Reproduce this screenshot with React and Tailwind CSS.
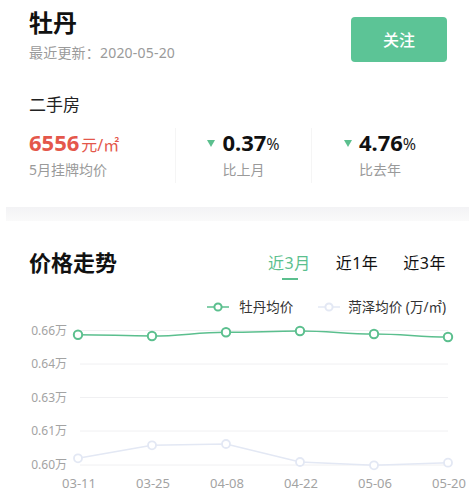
import React from 'react';

const green = '#5bbf8e';
const light = '#e3e8f4';

const xs = [78, 152, 226, 300, 374, 448];
const greenYs = [334.7, 336, 332.3, 331, 334, 337];
const lightYs = [458.3, 445.3, 444, 462, 465.3, 462.7];
const dates = ['03-11', '03-25', '04-08', '04-22', '05-06', '05-20'];
const yTicks = [
  { label: '0.66万', y: 330.5 },
  { label: '0.64万', y: 364 },
  { label: '0.63万', y: 397.5 },
  { label: '0.61万', y: 431 },
  { label: '0.60万', y: 465 },
];

function smoothPath(ys) {
  let d = `M${xs[0]} ${ys[0]}`;
  for (let i = 1; i < xs.length; i++) {
    const cx = (xs[i] - xs[i - 1]) * 0.4;
    d += ` C${xs[i - 1] + cx} ${ys[i - 1]} ${xs[i] - cx} ${ys[i]} ${xs[i]} ${ys[i]}`;
  }
  return d;
}

function linePath(ys) {
  return xs.map((x, i) => `${i ? 'L' : 'M'}${x} ${ys[i]}`).join(' ');
}

function DownArrow() {
  return (
    <svg width="8" height="7" viewBox="0 0 8 7" className="mr-[7px] mt-[3px]">
      <path d="M0 0 H8 L4 7 Z" fill={green} />
    </svg>
  );
}

function Chart() {
  return (
    <svg width="475" height="176" viewBox="0 318 475 176" className="block">
      {yTicks.map(t => (
        <g key={t.label}>
          <line x1="80" x2="448" y1={t.y} y2={t.y} stroke="#f0f0f2" strokeWidth="1" />
          <text x="67" y={t.y + 4} textAnchor="end" fontSize="12" fill="#a3a3a3">
            {t.label}
          </text>
        </g>
      ))}
      <path d={linePath(lightYs)} fill="none" stroke={light} strokeWidth="1.5" />
      <path d={smoothPath(greenYs)} fill="none" stroke={green} strokeWidth="1.5" />
      {xs.map((x, i) => (
        <circle key={'l' + i} cx={x} cy={lightYs[i]} r="4" fill="#fff" stroke={light} strokeWidth="1.8" />
      ))}
      {xs.map((x, i) => (
        <circle key={'g' + i} cx={x} cy={greenYs[i]} r="4.2" fill="#fff" stroke={green} strokeWidth="2" />
      ))}
      {dates.map((d, i) => (
        <text key={d} x={xs[i] + 1} y="488" textAnchor="middle" fontSize="13" fill="#a3a3a3">
          {d}
        </text>
      ))}
    </svg>
  );
}

export default function App() {
  return (
    <div
      className="w-[475px] h-[494px] bg-white overflow-hidden"
      style={{ fontFamily: '"Noto Sans", "Noto Sans CJK SC", sans-serif' }}
    >
      {/* header */}
      <div className="flex justify-between pl-[29px] pr-[28px] pt-[7px]">
        <div>
          <div className="text-[24px] leading-[32px] font-bold text-[#111]">牡丹</div>
          <div className="mt-1 text-[14px] leading-5 text-[#9a9a9a] tracking-[0.2px]">最近更新：2020-05-20</div>
        </div>
        <button className="mt-[10px] w-[96px] h-[45px] rounded-[4px] bg-[#5cc496] text-white text-[16px] font-medium">
          关注
        </button>
      </div>

      {/* second-hand */}
      <div className="pl-[29px] pr-[27px] mt-[30px]">
        <div className="text-[17px] leading-6 text-[#222]">二手房</div>
        <div className="flex mt-[11px]">
          <div className="w-[147px] border-r border-[#f5f5f5]">
            <div className="flex items-baseline h-[28px]">
              <span className="text-[22px] font-bold text-[#e4574b] leading-[28px]">6556</span>
              <span className="text-[16px] text-[#e4574b] ml-[2px]">元/㎡</span>
            </div>
            <div className="mt-1 text-[14px] leading-5 text-[#9a9a9a] pb-[3px]">5月挂牌均价</div>
          </div>
          <div className="w-[136px] border-r border-[#f5f5f5] flex flex-col items-center">
            <div className="flex items-center h-[28px]">
              <DownArrow />
              <span className="text-[22px] font-bold text-[#111] leading-[28px]">0.37</span>
              <span className="text-[16px] text-[#222] mt-[3px]">%</span>
            </div>
            <div className="mt-1 text-[14px] leading-5 text-[#9a9a9a]">比上月</div>
          </div>
          <div className="w-[136px] flex flex-col items-center">
            <div className="flex items-center h-[28px]">
              <DownArrow />
              <span className="text-[22px] font-bold text-[#111] leading-[28px]">4.76</span>
              <span className="text-[16px] text-[#222] mt-[3px]">%</span>
            </div>
            <div className="mt-1 text-[14px] leading-5 text-[#9a9a9a]">比去年</div>
          </div>
        </div>
      </div>

      {/* separator band */}
      <div className="mx-[6px] mt-[24px] h-[14px] bg-gradient-to-b from-[#f3f3f5] to-[#fafafa]" />

      {/* trend */}
      <div className="flex justify-between items-center pl-[29px] pr-[29px] mt-[26px]">
        <div className="text-[22px] leading-[30px] font-bold text-[#111]">价格走势</div>
        <div className="flex gap-[25px] text-[16px] leading-6 mt-[2px] tracking-[0.5px]">
          <div className="relative text-[#5bbf8e]">
            近3月
            <div className="absolute left-[14px] top-[27px] w-[16px] h-[2px] bg-[#5bbf8e]" />
          </div>
          <div className="text-[#111]">近1年</div>
          <div className="text-[#111]">近3年</div>
        </div>
      </div>

      {/* legend */}
      <div className="flex justify-end items-center pr-[29px] mt-[21px] text-[13.5px] leading-[18px] text-[#333]">
        <svg width="22" height="10" viewBox="0 0 22 10" className="mr-[10px]">
          <line x1="0" x2="22" y1="5" y2="5" stroke={green} strokeWidth="1.5" />
          <circle cx="11" cy="5" r="3.6" fill="#fff" stroke={green} strokeWidth="2" />
        </svg>
        <span>牡丹均价</span>
        <svg width="22" height="10" viewBox="0 0 22 10" className="ml-[25px] mr-[8px]">
          <line x1="0" x2="22" y1="5" y2="5" stroke={light} strokeWidth="1.5" />
          <circle cx="11" cy="5" r="3.6" fill="#fff" stroke={light} strokeWidth="2" />
        </svg>
        <span>菏泽均价 (万/㎡)</span>
      </div>

      <div className="mt-[2px]">
        <Chart />
      </div>
    </div>
  );
}
